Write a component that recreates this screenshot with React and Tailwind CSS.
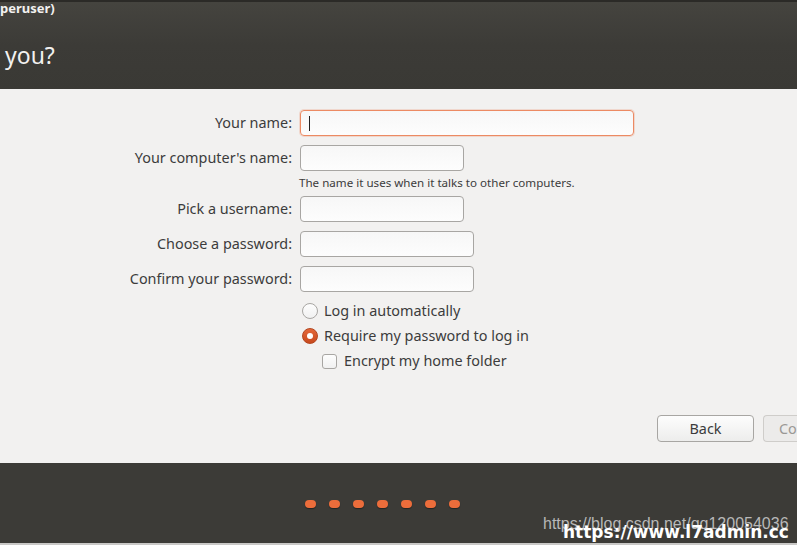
import React from 'react';

const Field = ({ label, width, focused, hint, mt }) => (
  <div className={`flex ${mt}`}>
    <div className="w-[292px] text-right text-[14.4px] leading-[26px] text-[#3c3c3c]">{label}</div>
    <div className="ml-[8px]">
      <div
        className={`h-[26px] rounded-[4px] border bg-gradient-to-b from-[#f7f7f7] to-[#fdfdfd] flex items-center pl-[8px] ${width} ${
          focused ? 'border-[#ec8a63] shadow-[0_0_0_1px_rgba(236,138,99,0.25)]' : 'border-[#a8a6a3]'
        }`}
      >
        {focused && <div className="w-px h-[15px] bg-[#222]" />}
      </div>
      {hint && <div className="mt-[5px] -ml-px text-[11.6px] leading-[14px] text-[#3c3c3c]">{hint}</div>}
    </div>
  </div>
);

const Radio = ({ checked, label }) => (
  <div className="flex items-center h-[20px]">
    {checked ? (
      <div className="w-[16px] h-[16px] rounded-full bg-gradient-to-b from-[#e4683a] to-[#c8491c] border border-[#b4461f] flex items-center justify-center">
        <div className="w-[6px] h-[6px] rounded-full bg-white" />
      </div>
    ) : (
      <div className="w-[16px] h-[16px] rounded-full border border-[#a8a6a3] bg-gradient-to-b from-[#fdfdfd] to-[#f1f1f1]" />
    )}
    <span className="ml-[6px] text-[14.4px] text-[#3c3c3c]">{label}</span>
  </div>
);

export default function App() {
  return (
    <div className="w-[797px] h-[545px] overflow-hidden relative bg-[#f2f1f0]" style={{ fontFamily: '"Noto Sans", "Open Sans", sans-serif' }}>
      {/* header */}
      <div className="h-[2px] bg-[#2b2a27]" />
      <div className="h-[87px] flex flex-col bg-gradient-to-b from-[#45443f] via-[#3c3b37] to-[#3a3935]">
        <div className="-mt-[3px] text-[13px] font-bold text-[#f2f1f0] leading-[18px]">peruser)</div>
        <div className="mt-[23px] pl-[5px] text-[23px] text-[#f2f1f0] leading-[30px]">you?</div>
      </div>

      {/* form */}
      <div className="h-[374px] pt-[21px]">
        <Field label="Your name:" width="w-[334px]" focused />
        <Field label="Your computer's name:" width="w-[164px]" mt="mt-[9px]" hint="The name it uses when it talks to other computers." />
        <Field label="Pick a username:" width="w-[164px]" mt="mt-[6px]" />
        <Field label="Choose a password:" width="w-[174px]" mt="mt-[9px]" />
        <Field label="Confirm your password:" width="w-[174px]" mt="mt-[9px]" />

        <div className="ml-[302px] mt-[9px]">
          <Radio label="Log in automatically" />
          <div className="mt-[5px]">
            <Radio checked label="Require my password to log in" />
          </div>
          <div className="mt-[5px] ml-[20px] flex items-center h-[20px]">
            <div className="w-[15px] h-[15px] rounded-[3px] border border-[#a8a6a3] bg-gradient-to-b from-[#fdfdfd] to-[#f1f1f1]" />
            <span className="ml-[7px] text-[14.4px] text-[#3c3c3c]">Encrypt my home folder</span>
          </div>
        </div>

        <div className="flex mt-[44px] ml-[657px]">
          <div className="w-[97px] h-[27px] shrink-0 rounded-[4px] border border-[#a8a6a3] bg-gradient-to-b from-[#fdfdfd] to-[#ededec] flex items-center justify-center text-[14.4px] text-[#3c3c3c]">
            Back
          </div>
          <div className="ml-[9px] w-[40px] h-[27px] shrink-0 overflow-hidden rounded-l-[4px] border border-r-0 border-[#cfcdca] bg-[#ecebea] flex items-center pl-[15px] text-[14.4px] text-[#9a9895] whitespace-nowrap">
            Co
          </div>
        </div>
      </div>

      {/* footer */}
      <div className="h-[80px] bg-[#3c3b37] flex items-center pl-[305px]">
        <div className="flex gap-[13px] mt-[2px]">
          {[0, 1, 2, 3, 4, 5, 6].map((i) => (
            <div key={i} className="w-[11px] h-[8px] rounded-full bg-[#ec6d3b] shadow-[0_1px_1px_rgba(0,0,0,0.4)]" />
          ))}
        </div>
      </div>
      <div className="h-[2px] bg-[#c9c8c6]" />

      {/* watermarks */}
      <div className="absolute left-[543px] top-[515px] text-[16px] text-[#b8b8b8] leading-[18px]" style={{ fontFamily: '"Liberation Sans", Arial, sans-serif' }}>
        https://blog.csdn.net/qq120054036
      </div>
      <div className="absolute left-[563px] top-[522px] text-[17px] font-bold text-white leading-[20px]" style={{ fontFamily: '"DejaVu Sans", sans-serif' }}>
        https://www.l7admin.cc
      </div>
    </div>
  );
}
